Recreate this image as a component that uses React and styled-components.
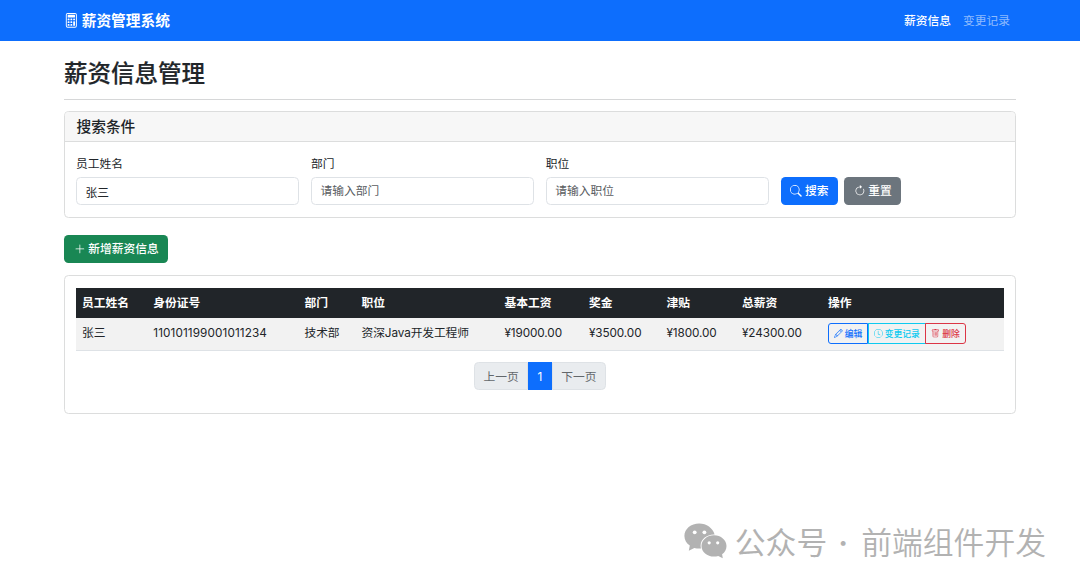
import React from "react";
import styled, { createGlobalStyle } from "styled-components";
import {
  BsCalculator as Calculator,
  BsSearch as Search,
  BsArrowClockwise as Reset,
  BsPlusLg as Plus,
  BsPencil as Pencil,
  BsClock as Clock,
  BsTrash as Trash,
} from "react-icons/bs";

const columns = [
  { title: "员工姓名", width: 71.3 },
  { title: "身份证号", width: 151.2 },
  { title: "部门", width: 57 },
  { title: "职位", width: 143 },
  { title: "基本工资", width: 84.5 },
  { title: "奖金", width: 77.5 },
  { title: "津贴", width: 75.5 },
  { title: "总薪资", width: 86 },
  { title: "操作", width: 181.5 },
];

const salaries = [
  {
    name: "张三",
    idCard: "110101199001011234",
    department: "技术部",
    position: "资深Java开发工程师",
    base: 19000,
    bonus: 3500,
    allowance: 1800,
  },
];

const money = (value) => `¥${value.toFixed(2)}`;

function SearchCard() {
  return (
    <Card>
      <CardHeader>
        <h5>搜索条件</h5>
      </CardHeader>
      <SearchForm>
        <Field>
          <label htmlFor="name">员工姓名</label>
          <Input id="name" defaultValue="张三" />
        </Field>
        <Field>
          <label htmlFor="department">部门</label>
          <Input id="department" placeholder="请输入部门" />
        </Field>
        <Field>
          <label htmlFor="position">职位</label>
          <Input id="position" placeholder="请输入职位" />
        </Field>
        <FormButtons>
          <Button $color="#0d6efd">
            <Search />
            搜索
          </Button>
          <Button $color="#6c757d">
            <Reset />
            重置
          </Button>
        </FormButtons>
      </SearchForm>
    </Card>
  );
}

function SalaryTable() {
  return (
    <Table>
      <colgroup>
        {columns.map((column) => (
          <Col key={column.title} $width={column.width} />
        ))}
      </colgroup>
      <thead>
        <tr>
          {columns.map((column) => (
            <th key={column.title}>{column.title}</th>
          ))}
        </tr>
      </thead>
      <tbody>
        {salaries.map((row) => (
          <tr key={row.idCard}>
            <td>{row.name}</td>
            <IdCell>{row.idCard}</IdCell>
            <td>{row.department}</td>
            <td>{row.position}</td>
            <td>{money(row.base)}</td>
            <td>{money(row.bonus)}</td>
            <td>{money(row.allowance)}</td>
            <td>{money(row.base + row.bonus + row.allowance)}</td>
            <ActionCell>
              <ButtonGroup>
                <OutlineButton $color="#0d6efd">
                  <Pencil />
                  编辑
                </OutlineButton>
                <OutlineButton $color="#0dcaf0">
                  <Clock />
                  变更记录
                </OutlineButton>
                <OutlineButton $color="#dc3545">
                  <Trash />
                  删除
                </OutlineButton>
              </ButtonGroup>
            </ActionCell>
          </tr>
        ))}
      </tbody>
    </Table>
  );
}

function WechatMark() {
  return (
    <svg width="44" height="36" viewBox="0 0 44 36">
      <path
        fill="#b2b2b2"
        d="M15.200.6C7 .6.4 6.100.4 13c0 3.900 2.100 7.300 5.400 9.600L4.800 27.800l5.500-2.900c1.700.5 3.100.6 4.900.6h1.800a11 11 0 0 1-.4-2.800c0-6.200 5.900-11.200 13.200-11.200h.8C28.800 5.200 22.600.6 15.200.6Z"
      />
      <path
        fill="#b2b2b2"
        d="M30 12.200c-6.900 0-12.500 4.800-12.500 10.700S23.100 33.600 30 33.600c1.500 0 2.900-.2 4.200-.6l4.600 2.300-.7-4.100c2.700-1.900 4.400-4.900 4.400-8.300 0-5.900-5.600-10.700-12.500-10.700Z"
      />
      <g fill="#fff">
        <circle cx="10.700" cy="9.300" r="1.900" />
        <circle cx="20.400" cy="9.300" r="1.900" />
        <circle cx="25.200" cy="19.800" r="1.600" />
        <circle cx="33.700" cy="19.800" r="1.600" />
      </g>
    </svg>
  );
}

function App() {
  return (
    <>
      <GlobalStyle />
      <Navbar>
        <Brand>
          <Calculator />
          <span>薪资管理系统</span>
        </Brand>
        <Nav>
          <NavLink $active>薪资信息</NavLink>
          <NavLink>变更记录</NavLink>
        </Nav>
      </Navbar>
      <Container>
        <PageTitle>薪资信息管理</PageTitle>
        <SearchCard />
        <AddButton $color="#198754">
          <Plus />
          新增薪资信息
        </AddButton>
        <Card>
          <TableBody>
            <SalaryTable />
            <Pagination>
              <PageItem>上一页</PageItem>
              <PageItem $active>1</PageItem>
              <PageItem>下一页</PageItem>
            </Pagination>
          </TableBody>
        </Card>
      </Container>
      <Watermark>
        <WechatMark />
        <Account>公众号</Account>
        <Dot>·</Dot>
        <span>前端组件开发</span>
      </Watermark>
    </>
  );
}

export default App;

const GlobalStyle = createGlobalStyle`
  * {
    box-sizing: border-box;
  }

  body {
    margin: 0;
    overflow: hidden;
    background: #fff;
    color: #212529;
    font-family: Inter, "Noto Sans CJK SC", sans-serif;
    font-size: 11.75px;
    line-height: 17.6px;
  }

  h2,
  h5 {
    margin: 0;
    font-weight: 500;
  }

  button,
  input {
    font: inherit;
  }
`;

const Navbar = styled.nav`
  display: flex;
  align-items: center;
  justify-content: space-between;
  height: 41px;
  padding: 0 70px 0 64px;
  background: #0d6efd;
  color: #fff;
`;

const Brand = styled.div`
  display: flex;
  align-items: center;
  gap: 3px;
  font-size: 14.7px;
  font-weight: 700;

  span {
    padding-top: 2px;
  }
`;

const Nav = styled.div`
  display: flex;
  gap: 12px;
  padding-top: 2px;
`;

const NavLink = styled.a`
  color: ${(props) => (props.$active ? "#fff" : "rgba(255, 255, 255, 0.55)")};
  font-weight: ${(props) => (props.$active ? 500 : 400)};
`;

const Container = styled.main`
  padding: 19px 64px 0;
`;

const PageTitle = styled.h2`
  height: 40px;
  margin-bottom: 11px;
  border-bottom: 1px solid #d6d7d8;
  font-size: 23.5px;
  line-height: 28px;
  -webkit-text-stroke: 0.2px #212529;
`;

const Card = styled.section`
  border: 1px solid #dcdddd;
  border-radius: 4.5px;
  overflow: hidden;
`;

const CardHeader = styled.header`
  height: 30px;
  padding: 6px 11.5px;
  border-bottom: 1px solid #dcdddd;
  background: #f7f7f7;

  h5 {
    font-size: 14.7px;
    line-height: 18px;
  }
`;

const SearchForm = styled.form`
  display: grid;
  grid-template-columns: repeat(4, 1fr);
  gap: 11.7px;
  height: 75px;
  padding: 11px 11px 12px;
`;

const Field = styled.div`
  display: flex;
  flex-direction: column;
  justify-content: flex-end;
  gap: 3.4px;
  min-width: 0;
`;

const Input = styled.input`
  width: 100%;
  height: 28px;
  padding: 0 8.5px;
  border: 1px solid #dee2e6;
  border-radius: 4.5px;
  background: #fff;
  color: #212529;

  &::placeholder {
    color: #595c5f;
    opacity: 1;
  }
`;

const FormButtons = styled.div`
  display: flex;
  align-items: flex-end;
  gap: 6px;
`;

const Button = styled.button`
  display: inline-flex;
  align-items: center;
  gap: 3px;
  height: 28px;
  padding: 2px 9.5px 0;
  border: 0;
  border-radius: 4.5px;
  background: ${(props) => props.$color};
  color: #fff;
  font-weight: 500;
  white-space: nowrap;

  svg {
    margin-bottom: 2px;
  }
`;

const AddButton = styled(Button)`
  display: flex;
  margin: 17px 0 12px;
`;

const TableBody = styled.div`
  height: 137px;
  padding: 12px 11px;
`;

const Table = styled.table`
  width: 927.5px;
  table-layout: fixed;
  border-collapse: collapse;

  th,
  td {
    padding: 1px 0 0 6px;
    text-align: left;
    white-space: nowrap;
  }

  th {
    height: 30px;
    background: #212529;
    color: #fff;
    font-weight: 700;
  }

  td {
    height: 32px;
    padding-top: 7px;
    border-bottom: 1px solid #dee2e6;
    background: #f2f2f2;
    letter-spacing: -0.1px;
    vertical-align: top;
  }
`;

const Col = styled.col`
  width: ${(props) => props.$width}px;
`;

const IdCell = styled.td`
  && {
    letter-spacing: 0.1px;
  }
`;

const ActionCell = styled.td`
  && {
    padding-top: 5px;
    letter-spacing: 0;
  }
`;

const ButtonGroup = styled.div`
  display: flex;
`;

const OutlineButton = styled.button`
  display: flex;
  align-items: center;
  gap: 2px;
  height: 21px;
  padding: 1px 5px 0;
  border: 1px solid ${(props) => props.$color};
  background: transparent;
  color: ${(props) => props.$color};
  font-size: 8.8px;
  font-weight: 500;

  svg {
    margin-bottom: 1px;
  }

  &:first-child {
    border-radius: 3px 0 0 3px;
  }

  &:last-child {
    border-radius: 0 3px 3px 0;
  }

  & + & {
    margin-left: -0.5px;
  }
`;

const Pagination = styled.div`
  display: flex;
  justify-content: center;
  margin-top: 11px;
`;

const PageItem = styled.span`
  height: 28px;
  padding: 6px 8.3px 4px;
  border: 1px solid ${(props) => (props.$active ? "#0d6efd" : "#dee2e6")};
  background: ${(props) => (props.$active ? "#0d6efd" : "#e9ecef")};
  color: ${(props) => (props.$active ? "#fff" : "#62676b")};
  ${(props) => props.$active && "min-width: 24px; text-align: center;"}

  &:first-child {
    border-radius: 4.5px 0 0 4.5px;
  }

  &:last-child {
    border-radius: 0 4.5px 4.5px 0;
  }
`;

/* floats over the bottom right corner of the page */
const Watermark = styled.div`
  position: absolute;
  right: 34px;
  bottom: 23px;
  display: flex;
  align-items: center;
  color: #b2b2b2;
  font-size: 30.8px;
  font-weight: 350;
  line-height: 40px;

  svg {
    margin: 0 7px 4px 0;
  }
`;

const Account = styled.span`
  font-weight: 400;
`;

const Dot = styled.span`
  width: 34px;
  padding-right: 2px;
  font-weight: 600;
  text-align: center;
`;
